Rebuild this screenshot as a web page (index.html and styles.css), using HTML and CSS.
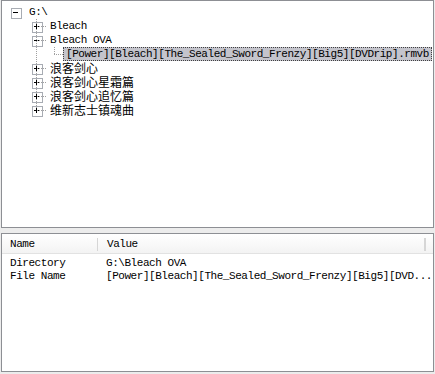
FILE: index.html
```html
<!DOCTYPE html>
<html>
<head>
<meta charset="utf-8">
<link rel="stylesheet" href="styles.css">
</head>
<body>
<div class="app">
  <div class="pane tree-pane">
    <ul class="tree">
      <li class="node">
        <div class="row"><span class="exp minus"></span><span class="label">G:\</span></div>
        <ul class="children lvl1">
          <li class="node">
            <div class="row"><span class="exp plus"></span><span class="label">Bleach</span></div>
          </li>
          <li class="node">
            <div class="row"><span class="exp minus"></span><span class="label">Bleach OVA</span></div>
            <ul class="children lvl2">
              <li class="node">
                <div class="row"><span class="leaf"></span><span class="label selected">[Power][Bleach][The_Sealed_Sword_Frenzy][Big5][DVDrip].rmvb</span></div>
              </li>
            </ul>
          </li>
          <li class="node">
            <div class="row"><span class="exp plus"></span><span class="label cjk">浪客剑心</span></div>
          </li>
          <li class="node">
            <div class="row"><span class="exp plus"></span><span class="label cjk">浪客剑心星霜篇</span></div>
          </li>
          <li class="node">
            <div class="row"><span class="exp plus"></span><span class="label cjk">浪客剑心追忆篇</span></div>
          </li>
          <li class="node last">
            <div class="row"><span class="exp plus"></span><span class="label cjk">维新志士镇魂曲</span></div>
          </li>
        </ul>
      </li>
    </ul>
  </div>
  <div class="pane list-pane">
    <div class="header">
      <div class="hcell col-name">Name</div>
      <div class="hcell col-value">Value</div>
      <div class="hfill"></div>
    </div>
    <div class="lrow"><div class="cell col-name">Directory</div><div class="cell col-value">G:\Bleach OVA</div></div>
    <div class="lrow"><div class="cell col-name">File Name</div><div class="cell col-value">[Power][Bleach][The_Sealed_Sword_Frenzy][Big5][DVD...</div></div>
  </div>
</div>
</body>
</html>
```
FILE: styles.css
```css
* { box-sizing: border-box; }
html, body { margin: 0; padding: 0; }
body {
  background: #ececec;
  width: 435px;
  height: 374px;
  overflow: hidden;
  font-family: "Liberation Mono", "Noto Sans CJK SC", monospace;
  font-size: 11px;
  line-height: 12px;
  letter-spacing: -0.45px;
  color: #000;
}
.app {
  display: flex;
  flex-direction: column;
  gap: 5px;
  padding: 0 1px 2px 1px;
}
.pane {
  background: #fff;
  border: 1px solid #8d8f94;
  width: 433px;
}
.tree-pane {
  height: 228px;
  padding: 4px 0 0 4px;
}
.list-pane {
  height: 139px;
}
ul { list-style: none; margin: 0; padding: 0; }
.children { position: relative; }
.lvl1 { padding-left: 21px; }
.lvl2 { padding-left: 16px; }
.children > li { position: relative; }
/* vertical sibling connector */
.children::before {
  content: "";
  position: absolute;
  border-left: 1px dotted #a0a0a0;
}
.lvl1::before { left: 30px; top: 0; height: 91px; }
.lvl2::before { left: 27px; top: 0; height: 7px; }
.row {
  display: flex;
  align-items: center;
  height: 14px;
  position: relative;
}
.exp, .leaf {
  position: relative;
  width: 20px;
  height: 14px;
  flex: none;
}
/* horizontal connector */
.lvl1 .exp::after {
  content: "";
  position: absolute;
  left: 10px;
  top: 7px;
  width: 9px;
  border-top: 1px dotted #a0a0a0;
}
.leaf::after {
  content: "";
  position: absolute;
  left: 11px;
  top: 7px;
  width: 9px;
  border-top: 1px dotted #a0a0a0;
}
.exp::before {
  content: "";
  position: absolute;
  left: 5px;
  top: 3px;
  width: 9px;
  height: 9px;
  border: 1px solid #a8acb3;
  background: transparent;
  z-index: 2;
}
.exp.minus {
  background: linear-gradient(#000, #000) 7px 7px / 5px 1px no-repeat;
}
.exp.plus {
  background:
    linear-gradient(#000, #000) 7px 7px / 5px 1px no-repeat,
    linear-gradient(#000, #000) 9px 5px / 1px 5px no-repeat;
}
.label {
  padding: 0 2px;
  height: 14px;
  line-height: 12px;
  white-space: nowrap;
  border: 1px solid transparent;
  display: flex;
  align-items: center;
}
.cjk {
  font-family: "Noto Sans CJK SC", sans-serif;
  font-size: 12px;
  line-height: 12px;
  letter-spacing: 0;
}
.selected {
  background: #c4c4cc;
  border: 1px dotted #404040;
}
.header {
  display: flex;
  height: 20px;
  align-items: center;
  background: linear-gradient(#ffffff, #f3f3f3);
  border-bottom: 1px solid #e2e2e2;
  padding-top: 1px;
}
.hcell {
  display: flex;
  align-items: center;
}
.header .col-name {
  width: 96px;
  padding-left: 8px;
  border-right: 1px solid #d6d6d6;
  height: 13px;
}
.header .col-value {
  width: 328px;
  padding-left: 9px;
  border-right: 2px solid #d6d6d6;
  height: 13px;
}
.hfill { flex: 1; }
.lrow {
  display: flex;
  height: 13px;
  align-items: center;
}
.header + .lrow { margin-top: 2px; }
.lrow .col-name { width: 96px; padding-left: 8px; }
.lrow .col-value { padding-left: 8px; white-space: nowrap; }
```
